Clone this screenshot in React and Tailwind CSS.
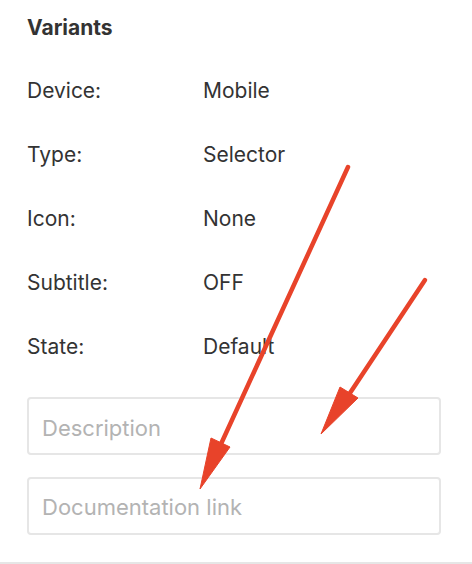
const rows = [
    ['Device:', 'Mobile'],
    ['Type:', 'Selector'],
    ['Icon:', 'None'],
    ['Subtitle:', 'OFF'],
    ['State:', 'Default'],
];

function Arrows() {
    return (
        <svg className="pointer-events-none absolute inset-0" width="472" height="564" viewBox="0 0 472 564">
            <g fill="#e8432a" stroke="#e8432a">
                <line x1="348" y1="167" x2="221" y2="444" strokeWidth="4.5" strokeLinecap="round" />
                <polygon points="200,489 211,438 230,447" strokeWidth="1" strokeLinejoin="round" />
                <line x1="425" y1="280" x2="350" y2="393" strokeWidth="4.5" strokeLinecap="round" />
                <polygon points="321,434 340,387 358,398" strokeWidth="1" strokeLinejoin="round" />
            </g>
        </svg>
    );
}

export default function App() {
    return (
        <div
            className="relative h-[564px] w-[472px] overflow-hidden bg-white text-[#333]"
            style={{ fontFamily: 'Inter, "Noto Sans", sans-serif' }}
        >
            <div className="flex h-[562px] flex-col pl-[27px] pr-[31px]">
                <div className="flex h-[54px] items-center pt-[1px] text-[21px] font-bold">Variants</div>

                <div className="mt-[4px] flex flex-col">
                    {rows.map(([label, value]) => (
                        <div key={label} className="flex h-16 items-center pt-[1px] text-[21px]">
                            <span className="w-[176px]">{label}</span>
                            <span>{value}</span>
                        </div>
                    ))}
                </div>

                <div className="mt-[19px] flex flex-col gap-[22px]">
                    <input
                        placeholder="Description"
                        className="h-[58px] w-full rounded-[4px] border-2 border-[#e6e6e6] px-[13px] pt-[3px] text-[22px] outline-none placeholder:text-[#b3b3b3]"
                    />
                    <input
                        placeholder="Documentation link"
                        className="h-[58px] w-full rounded-[4px] border-2 border-[#e6e6e6] px-[13px] pt-[1px] text-[22px] outline-none placeholder:text-[#b3b3b3]"
                    />
                </div>
            </div>
            <div className="h-[2px] w-full bg-[#e6e6e6]" />
            <Arrows />
        </div>
    );
}
